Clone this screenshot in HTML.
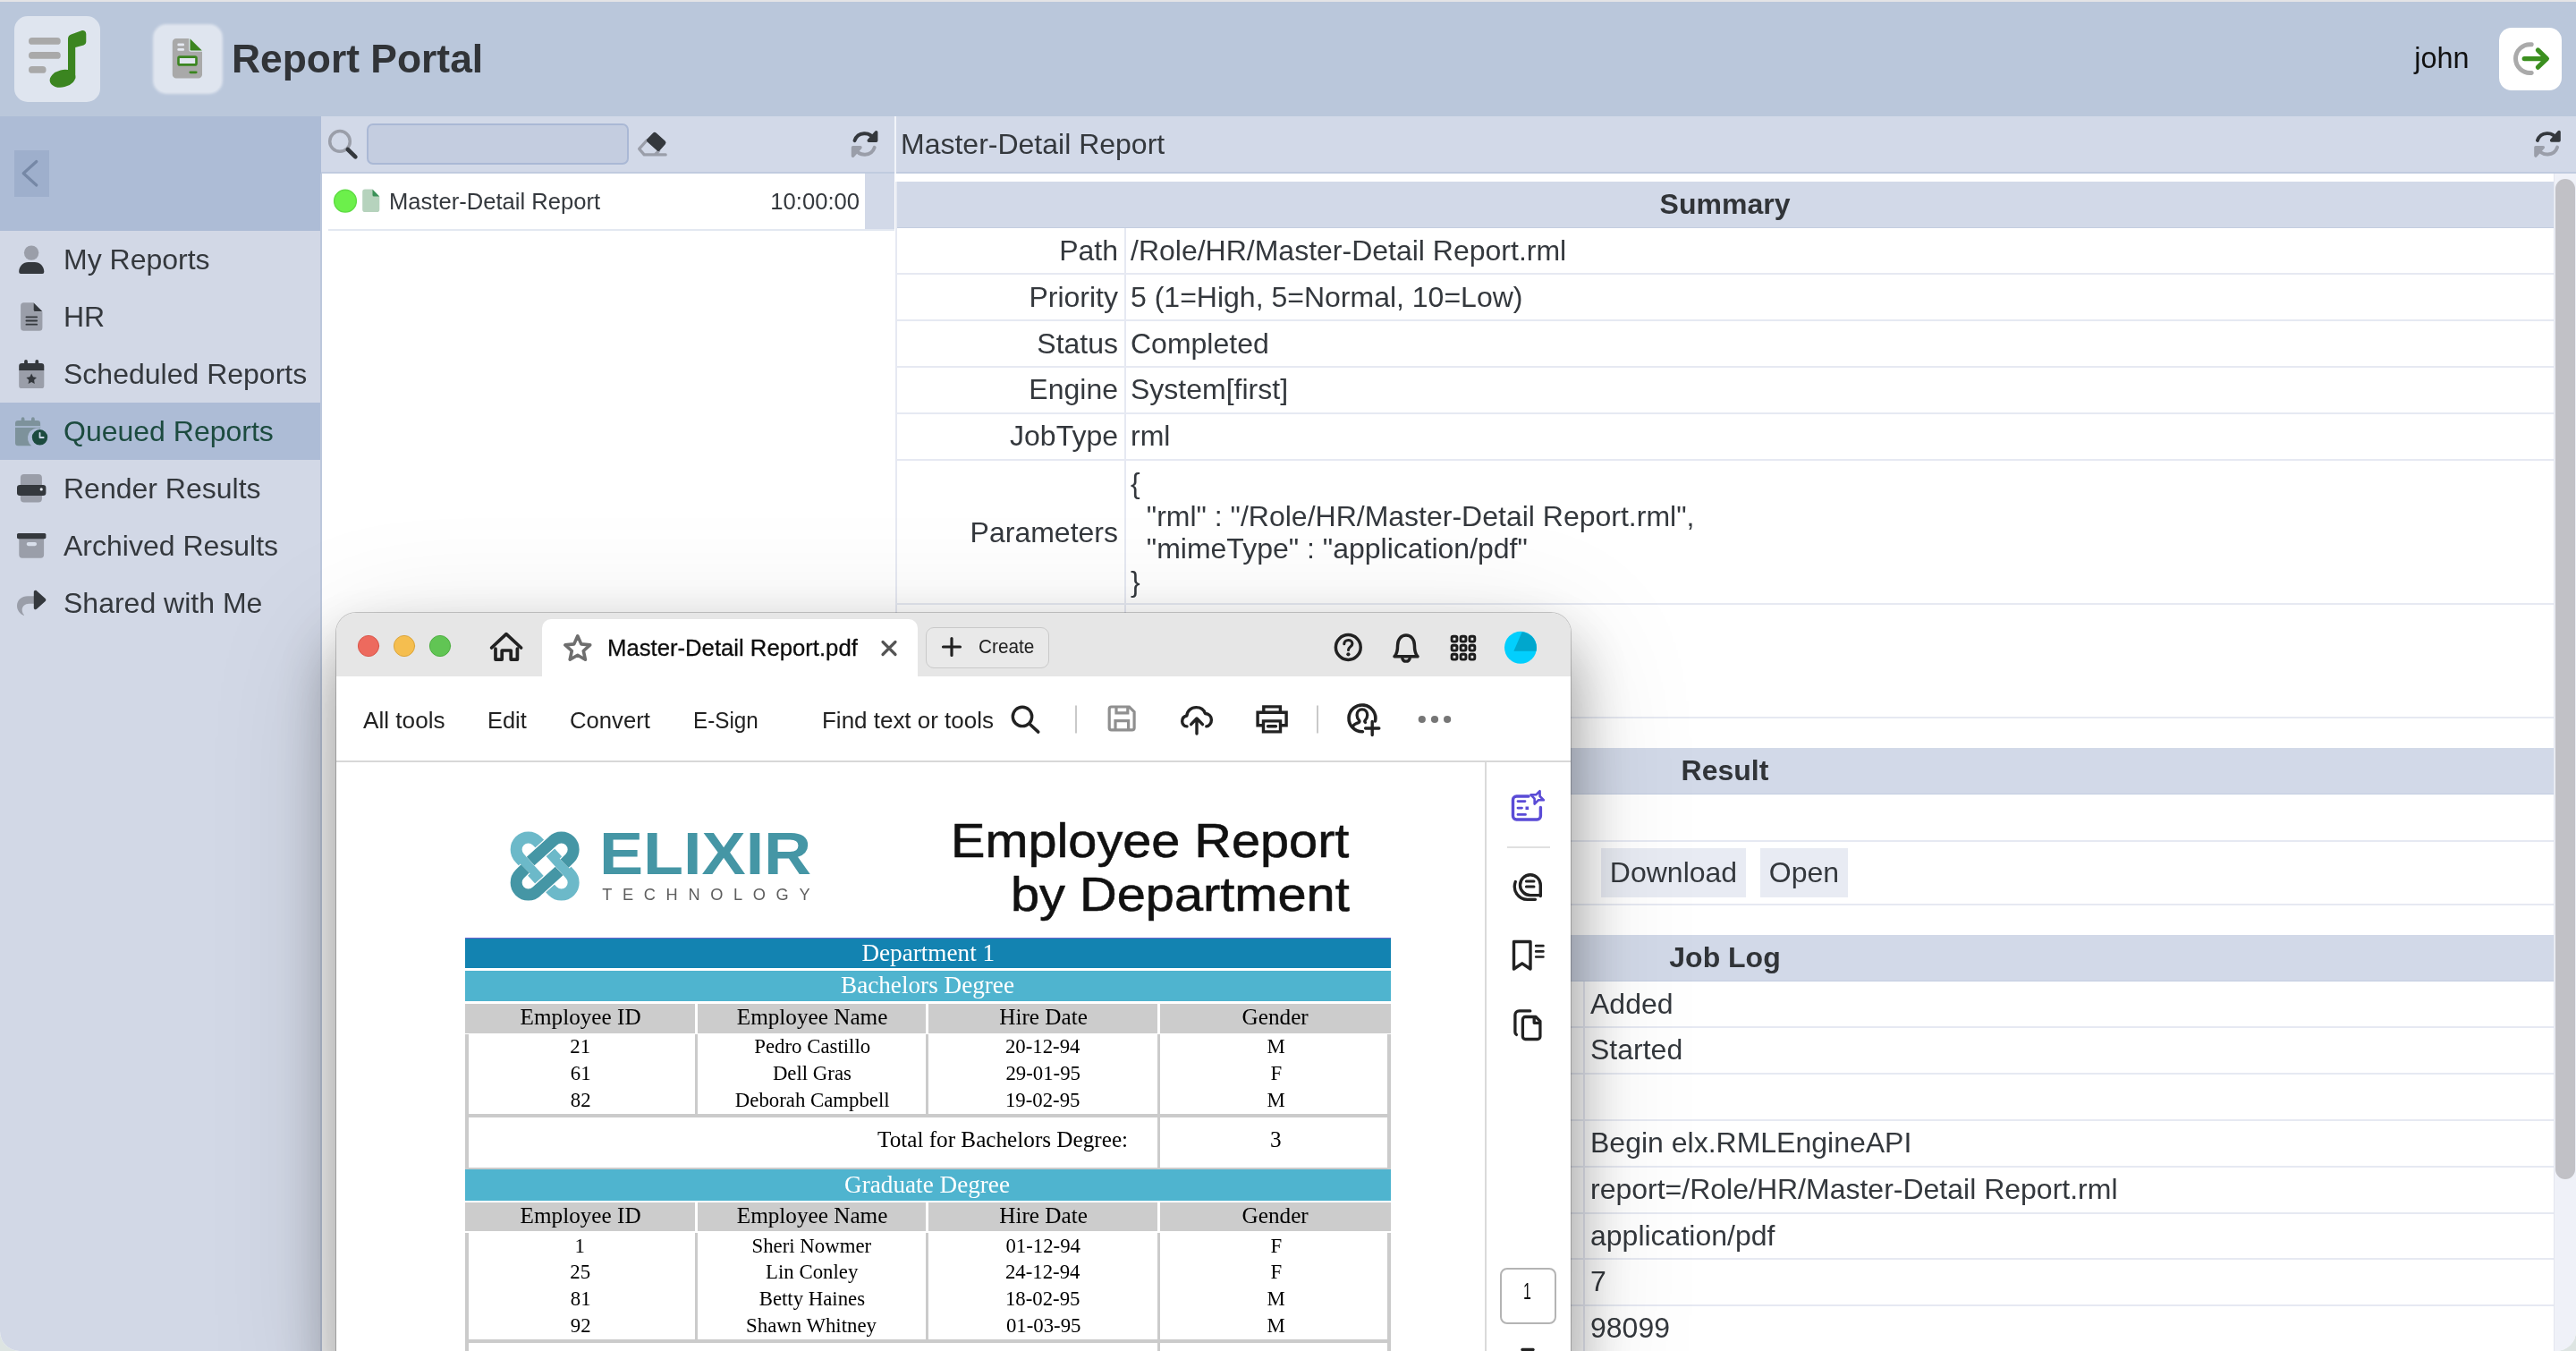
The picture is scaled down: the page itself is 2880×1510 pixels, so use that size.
<!DOCTYPE html>
<html lang="en">
<head>
<meta charset="utf-8">
<title>Report Portal</title>
<style>
*{box-sizing:border-box;margin:0;padding:0}
html,body{-webkit-font-smoothing:antialiased;width:2880px;height:1510px;overflow:hidden;background:#dde4e2;font-family:"Liberation Sans",sans-serif;color:#34383d}
.abs{position:absolute}
#app{will-change:transform;position:absolute;left:0;top:0;width:2880px;height:1510px;overflow:hidden;border-radius:0 0 22px 22px;background:#fff}
#topstrip{left:0;top:0;width:2880px;height:2px;background:#e4e4e6;z-index:5}
/* header */
#hdr{left:0;top:0;width:2880px;height:130px;background:#bac7db}
#logo{left:16px;top:18px;width:96px;height:96px;border-radius:15px;background:#dfe5ef}
#appicon{left:173px;top:29px;width:74px;height:74px;border-radius:13px;background:#dfe5ef;box-shadow:0 0 3px 2px #dfe5ef}
#apptitle{left:259px;top:38px;font-size:44.4px;font-weight:bold;line-height:56px;color:#313438;white-space:nowrap}
#user{left:2699.300px;top:43px;font-size:32.4px;line-height:44px;color:#111;white-space:nowrap}
#logout{left:2794px;top:31px;width:70px;height:70px;border-radius:14px;background:#fff}
/* sidebar */
#side{left:0;top:130px;width:360px;height:1380px;background:#d2d8e6}
#sidetop{left:0;top:0;width:359px;height:128px;background:#adbcd6}
#collapse{left:16px;top:38px;width:39px;height:52px;background:#9eafcc}
.nav{left:0;width:360px;height:64px;font-size:32px;line-height:64px;white-space:nowrap;color:#34383d}
.nav span{position:absolute;left:71px;top:0}
.nav svg{position:absolute;left:17px;top:14px;width:36px;height:36px}
.nav.sel{background:#adbcd6;color:#1c4b3f}
#sideedge{left:358px;top:64px;width:2px;height:1316px;background:#bcc7dc}
/* list panel */
#list{left:360px;top:130px;width:640px;height:1380px;background:#fff}
#ltool{left:-1px;top:0;width:641px;height:64px;background:#d2d9e8;border-bottom:2px solid #c0cbdf}
#lsearch{left:51px;top:8px;width:293px;height:46px;border-radius:7px;border:2px solid #aab8d5;background:#c4cde0}
#lrow{left:0;top:64px;width:640px;height:62px;font-size:25.6px;line-height:62px;white-space:nowrap}
#lrowline{left:7px;top:126px;width:633px;height:2px;background:#e3e8f1}
#lrowsel{left:607px;top:64px;width:33px;height:62px;background:#d2d9e8}
/* detail */
#det{left:1000px;top:130px;width:1880px;height:1380px;background:#fff}
#dtool{left:0;top:0;width:1880px;height:64px;background:#d2d9e8;border-bottom:2px solid #c0cbdf}
#dtitle{left:7px;top:0;font-size:32px;line-height:62px;white-space:nowrap}
.sec{left:2px;width:1853px;height:52px;background:#d2d9e8;font-size:32px;font-weight:bold;line-height:50px;text-align:center;color:#313438;border-bottom:1px solid #c3cde0}
.hl{left:2px;width:1853px;height:2px;background:#e6e9f2}
.vl{width:2px;background:#e6e9f2}
.lab{left:2px;width:248px;margin-top:-1px;text-align:right;font-size:32px;line-height:52px;white-space:nowrap}
.val{left:264px;margin-top:-1px;font-size:32px;line-height:52px;white-space:nowrap}
.btn{top:818px;height:55px;background:#e8ebf3;font-size:32px;line-height:55px;text-align:center}
#sbtrack{left:1855px;top:64px;width:25px;height:1316px;background:#eff1f8;border-left:1px solid #e3e6ef}
#sbthumb{left:1857px;top:70px;width:22px;height:1118px;border-radius:11px;background:#c1c1c6}
</style>
</head>
<body>
<div id="app">

<!-- ================= PORTAL HEADER ================= -->
<div id="hdr" class="abs">
  <div id="logo" class="abs"></div>
  <div id="appicon" class="abs"></div>
  <div id="apptitle" class="abs">Report Portal</div>
  <div id="user" class="abs">john</div>
  <div id="logout" class="abs"></div>
  <svg class="abs" style="left:0;top:0" width="2880" height="130" viewBox="0 0 2880 130">
    <!-- logo: list-music -->
    <g fill="#a9a9a9"><rect x="32" y="42" width="35.8" height="7.8" rx="3.9"/><rect x="32" y="58" width="35.8" height="7.8" rx="3.9"/><rect x="32" y="74" width="19.6" height="7.8" rx="3.9"/></g>
    <g fill="#3b8520"><ellipse cx="70" cy="87.8" rx="14.6" ry="9.6" transform="rotate(-14 70 87.8)"/>
    <path d="M76 88V43.2c0-2.2 1.4-4.1 3.5-4.8l11.6-4.2c2.6-.9 5.2 1 5.200 3.700v8.600c0 1.800-1.100 3.300-2.800 3.900L84.200 52.900V88z"/></g>
    <!-- app icon: file-invoice -->
    <path fill="#a9a9a9" d="M197 43h14.200v12.500a2.200 2.200 0 0 0 2.200 2.200H226v25.700a4.200 4.200 0 0 1-4.200 4.200h-24.800a4.200 4.200 0 0 1-4.200-4.200V47.200A4.200 4.200 0 0 1 197 43z"/>
    <path fill="#3b8520" d="M212.500 43.200L225.800 56.500H213.700a1.200 1.200 0 0 1-1.200-1.200z"/>
    <rect x="198.300" y="48.600" width="7.800" height="2.600" rx="1.300" fill="#e6eaf2"/><rect x="198.300" y="54.100" width="7.800" height="2.600" rx="1.300" fill="#e6eaf2"/>
    <rect x="199.500" y="63.600" width="20" height="8.800" rx="1.500" fill="#e1e6f0" stroke="#3b8520" stroke-width="2.600"/>
    <rect x="211.400" y="79.400" width="9.200" height="2.900" rx="1.450" fill="#3b8520"/>
    <!-- logout -->
    <path d="M2830.200 81.400A15.900 15.900 0 1 1 2830.200 49.800" fill="none" stroke="#aaaaaa" stroke-width="5" stroke-linecap="round"/>
    <path d="M2822.200 65.600H2847M2837.400 56L2847.400 65.600L2837.400 75.200" fill="none" stroke="#3b8f1f" stroke-width="5.200" stroke-linecap="round" stroke-linejoin="round"/>
  </svg>
</div>
<div id="topstrip" class="abs"></div>

<!-- ================= SIDEBAR ================= -->
<div id="side" class="abs">
  <div id="sidetop" class="abs"><div id="collapse" class="abs"></div></div>
  <div class="nav abs" style="top:128px"><span>My Reports</span></div>
  <div class="nav abs" style="top:192px"><span>HR</span></div>
  <div class="nav abs" style="top:256px"><span>Scheduled Reports</span></div>
  <div class="nav abs sel" style="top:320px"><span>Queued Reports</span></div>
  <div class="nav abs" style="top:384px"><span>Render Results</span></div>
  <div class="nav abs" style="top:448px"><span>Archived Results</span></div>
  <div class="nav abs" style="top:512px"><span>Shared with Me</span></div>
  <div id="sideedge" class="abs"></div>
  <svg class="abs" style="left:0;top:0" width="360" height="700" viewBox="0 130 360 700">
    <path d="M40.800 180.500L26.200 193.800L40.800 207" fill="none" stroke="#7688a6" stroke-width="3.200" stroke-linecap="round" stroke-linejoin="round"/>
    <!-- user -->
    <circle cx="35.100" cy="282.600" r="8.200" fill="#9a9ea9"/>
    <path d="M21.200 303.500c0-5.800 4.700-10.500 10.500-10.500h7.100c5.800 0 10.500 4.700 10.500 10.500v.500a2 2 0 0 1-2 2h-24.100a2 2 0 0 1-2-2z" fill="#34383d"/>
    <!-- file-lines -->
    <path d="M26.600 338.200H37.200v7.800a2.200 2.200 0 0 0 2.200 2.200h8v18.100a3.500 3.500 0 0 1-3.500 3.500H26.600a3.500 3.500 0 0 1-3.500-3.500V341.700a3.500 3.500 0 0 1 3.500-3.500z" fill="#9a9ea9"/>
    <path d="M37.500 338.300L47.300 348.100H39.400a1.900 1.900 0 0 1-1.900-1.900z" fill="#34383d"/>
    <path d="M29.400 354.300H41.200M29.400 358.500H41.200M29.400 362.700H41.200" stroke="#34383d" stroke-width="1.800" stroke-linecap="round"/>
    <!-- calendar-star -->
    <path d="M21.200 413.900H49.300v17a3.200 3.200 0 0 1-3.200 3.200H24.400a3.200 3.200 0 0 1-3.200-3.200z" fill="#9a9ea9"/>
    <path d="M21.200 413.900v-4.800a3.200 3.200 0 0 1 3.200-3.200h2.700v-2a1.900 1.900 0 0 1 3.800 0v2h8.500v-2a1.900 1.900 0 0 1 3.800 0v2h2.900a3.200 3.200 0 0 1 3.200 3.200v4.800z" fill="#34383d"/>
    <path d="M35.200 417.600l1.800 3.700 4 .600-2.900 2.900.700 4.100-3.600-1.900-3.600 1.900.700-4.100-2.900-2.900 4-.600z" fill="#34383d"/>
    <!-- calendar-clock (selected) -->
    <path d="M20.200 470h21.700a3.200 3.200 0 0 1 3.200 3.200v5.800a11 11 0 0 0-9.800 19.300H20.200a3.200 3.200 0 0 1-3.200-3.200V473.200a3.200 3.200 0 0 1 3.200-3.200z" fill="#7d929b"/>
    <path d="M23.700 468.200a1.900 1.900 0 0 1 3.800 0v3.200h-3.800zM35 468.200a1.900 1.900 0 0 1 3.800 0v3.200H35z" fill="#7d929b"/>
    <rect x="17" y="476.200" width="28.100" height="1.600" fill="#adbcd6"/>
    <circle cx="44.500" cy="488.800" r="8.700" fill="#1c4b3f"/>
    <path d="M44.500 484v5h4.200" fill="none" stroke="#c9d6e6" stroke-width="1.800" stroke-linecap="round" stroke-linejoin="round"/>
    <!-- print -->
    <rect x="22.900" y="530" width="24" height="31.600" rx="4" fill="#9a9ea9"/>
    <rect x="19" y="541.900" width="32.400" height="12" rx="3.200" fill="#34383d"/>
    <circle cx="46.200" cy="546.900" r="1.600" fill="#e8ecf4"/>
    <!-- box-archive -->
    <path d="M21.300 602.100H49.100v18a3.600 3.600 0 0 1-3.600 3.600H24.900a3.600 3.600 0 0 1-3.600-3.600z" fill="#9a9ea9"/>
    <rect x="19" y="596" width="32.400" height="6.200" rx="1.600" fill="#34383d"/>
    <rect x="29.700" y="605.900" width="11.400" height="4.300" rx="2.100" fill="#d9dfeb"/>
    <!-- share -->
    <path d="M38.500 666.200v8.600h-6c-4.600 0-7.800 3.200-7.800 7 0 2.600 1.100 4.300 2.100 5.200.500.500 0 1.100-.600.800C22.500 686.200 19 682.400 19 677c0-6.400 5.200-10.800 12.200-10.800z" fill="#9a9ea9"/>
    <path d="M37.800 661.700c0-1.600 1.900-2.400 3.100-1.400l9.800 8.800c.900.800.900 2.100 0 2.900l-9.800 8.800c-1.200 1.100-3.100.200-3.100-1.400z" fill="#34383d"/>
  </svg>
</div>

<!-- ================= LIST PANEL ================= -->
<div id="list" class="abs">
  <div id="ltool" class="abs"><div id="lsearch" class="abs"></div></div>
  <div id="lrow" class="abs"><span class="abs" style="left:75px">Master-Detail Report</span><span class="abs" style="right:39px">10:00:00</span></div>
  <div id="lrowsel" class="abs"></div>
  <div id="lrowline" class="abs"></div>
  <svg class="abs" style="left:0;top:0" width="640" height="140" viewBox="360 130 640 140">
    <circle cx="380" cy="157.900" r="11.300" fill="none" stroke="#9a9ea9" stroke-width="3.500"/>
    <path d="M388.800 167L397.400 175.400" stroke="#34383d" stroke-width="4.600" stroke-linecap="round"/>
    <path d="M723.300 156.700L714.600 166.400L720.200 172.900H744.200M736.600 168.500L732.200 172.900" fill="none" stroke="#9a9ea9" stroke-width="3.200" stroke-linecap="round" stroke-linejoin="round"/>
    <path d="M730 148.700a2.600 2.600 0 0 1 3.600-.100l10 9a2.600 2.600 0 0 1 .200 3.600l-6.200 7a2 2 0 0 1-2.800.200l-11.200-10a2 2 0 0 1-.200-2.800z" fill="#34383d"/>
    <path d="M955.5 157.2A11.7 11.7 0 0 1 977.2 156.1" fill="none" stroke="#34383d" stroke-width="3.900" stroke-linecap="round"/><path d="M979.7 147.7v9.500h-8.500z" fill="#34383d" stroke="#34383d" stroke-width="3.400" stroke-linecap="round" stroke-linejoin="round"/><path d="M977.7 164.8A11.7 11.7 0 0 1 956.0 165.9" fill="none" stroke="#9a9ea9" stroke-width="3.900" stroke-linecap="round"/><path d="M953.5 174.3v-9.500h8.500z" fill="#9a9ea9" stroke="#9a9ea9" stroke-width="3.400" stroke-linecap="round" stroke-linejoin="round"/>
    <circle cx="386" cy="224.700" r="12.400" fill="#6cf04b" stroke="#5fdc44" stroke-width="1.400"/>
    <path d="M408 211.600h8.500l7.800 7.800v14.800a2.800 2.800 0 0 1-2.800 2.800H408a2.800 2.800 0 0 1-2.800-2.800v-19.800a2.800 2.800 0 0 1 2.800-2.800z" fill="#b6d3bd"/>
    <path d="M416.500 211.800L424.100 219.400H418a1.500 1.500 0 0 1-1.500-1.500z" fill="#3a9157"/>
  </svg>
</div>

<!-- ================= DETAIL PANEL ================= -->
<div id="det" class="abs">
  <div id="dtool" class="abs"><div id="dtitle" class="abs">Master-Detail Report</div></div>
  <svg class="abs" style="left:1800px;top:0" width="80" height="64" viewBox="2800 130 80 64"><path d="M2836.9 157.0A11.7 11.7 0 0 1 2858.6 155.9" fill="none" stroke="#34383d" stroke-width="3.900" stroke-linecap="round"/><path d="M2861.1 147.5v9.500h-8.500z" fill="#34383d" stroke="#34383d" stroke-width="3.400" stroke-linecap="round" stroke-linejoin="round"/><path d="M2859.1 164.6A11.7 11.7 0 0 1 2837.4 165.7" fill="none" stroke="#9a9ea9" stroke-width="3.900" stroke-linecap="round"/><path d="M2834.9 174.1v-9.500h8.500z" fill="#9a9ea9" stroke="#9a9ea9" stroke-width="3.400" stroke-linecap="round" stroke-linejoin="round"/></svg>
  <div class="sec abs" style="top:73px">Summary</div>
  <div class="lab abs" style="top:125px">Path</div><div class="val abs" style="top:125px">/Role/HR/Master-Detail Report.rml</div>
  <div class="lab abs" style="top:177px">Priority</div><div class="val abs" style="top:177px">5 (1=High, 5=Normal, 10=Low)</div>
  <div class="lab abs" style="top:229px">Status</div><div class="val abs" style="top:229px">Completed</div>
  <div class="lab abs" style="top:280px">Engine</div><div class="val abs" style="top:280px">System[first]</div>
  <div class="lab abs" style="top:332px">JobType</div><div class="val abs" style="top:332px">rml</div>
  <div class="hl abs" style="top:175px"></div>
  <div class="hl abs" style="top:227px"></div>
  <div class="hl abs" style="top:279px"></div>
  <div class="hl abs" style="top:331px"></div>
  <div class="hl abs" style="top:383px"></div>
  <div class="hl abs" style="top:544px"></div>
  <div class="hl abs" style="top:671px"></div>
  <div class="lab abs" style="top:386px;line-height:161px">Parameters</div>
  <pre class="val abs" style="top:393px;line-height:36.6px;font-family:inherit;white-space:pre">{
  "rml" : "/Role/HR/Master-Detail Report.rml",
  "mimeType" : "application/pdf"
}</pre>
  <div class="vl abs" style="left:257px;top:125px;height:547px"></div>
  <div class="vl abs" style="left:1px;top:73px;height:1307px"></div>
  <div class="sec abs" style="top:706px">Result</div>
  <div class="hl abs" style="top:809px"></div>
  <div class="hl abs" style="top:880px"></div>
  <div class="btn abs" style="left:790px;width:162px">Download</div>
  <div class="btn abs" style="left:968px;width:98px">Open</div>
  <div class="sec abs" style="top:915px">Job Log</div>
  <div class="val abs" style="left:778px;top:967px">Added</div>
  <div class="val abs" style="left:778px;top:1018px">Started</div>
  <div class="val abs" style="left:778px;top:1122px">Begin elx.RMLEngineAPI</div>
  <div class="val abs" style="left:778px;top:1174px">report=/Role/HR/Master-Detail Report.rml</div>
  <div class="val abs" style="left:778px;top:1225.5px">application/pdf</div>
  <div class="val abs" style="left:778px;top:1277px">7</div>
  <div class="val abs" style="left:778px;top:1329px">98099</div>
  <div class="hl abs" style="top:1017px"></div>
  <div class="hl abs" style="top:1069px"></div>
  <div class="hl abs" style="top:1121px"></div>
  <div class="hl abs" style="top:1173px"></div>
  <div class="hl abs" style="top:1224.5px"></div>
  <div class="hl abs" style="top:1276px"></div>
  <div class="hl abs" style="top:1328px"></div>
  <div class="vl abs" style="left:770px;top:967px;height:413px"></div>
  <div id="sbtrack" class="abs"></div>
  <div id="sbthumb" class="abs"></div>
</div>

<div class="abs" style="left:1000px;top:130px;width:2px;height:64px;background:#f2f4f9"></div>
<style>
#awin{position:absolute;left:376px;top:685px;width:1380px;height:860px;border-radius:22px 22px 0 0;overflow:hidden;background:#fff;box-shadow:0 0 0 1px rgba(0,0,0,.2),0 36px 68px 0 rgba(0,0,0,.38),0 30px 150px 0 rgba(0,0,0,.13)}
#ain{position:absolute;left:-376px;top:-685px;width:2880px;height:1600px}
#ain .t{position:absolute;white-space:nowrap;display:block}
#ain div{position:absolute}
.gl{background:#cbcbcb}
</style>
<div id="awin"><div id="ain">
<div style="left:376px;top:685px;width:1380px;height:71px;background:#e6e6e6"></div>
<div style="left:606px;top:692px;width:420px;height:64px;background:#fff;border-radius:10px 10px 0 0"></div>
<div style="left:1035px;top:701px;width:138px;height:46px;border:1.5px solid #c9c9c9;border-radius:9px;background:#e9e9e9"></div>
<div style="left:376px;top:850px;width:1380px;height:2px;background:#d8d8d8"></div>
<div style="left:1660px;top:852px;width:2px;height:700px;background:#dadada"></div>
<div style="left:1685px;top:946px;width:48px;height:2px;background:#e0e0e0"></div>
<div style="left:1676.500px;top:1416.500px;width:63px;height:63px;border:2px solid #b4b4b4;border-radius:8px;background:#fff"></div>
<span class="t" style="left:678.6px;top:708.2px;font-size:26.4px;line-height:32px;color:#0c0c0c;transform:scaleX(0.9733);transform-origin:0 0;-webkit-text-stroke:0.300px #0c0c0c;">Master-Detail Report.pdf</span>
<span class="t" style="left:1093.6px;top:708.7px;font-size:22.5px;line-height:27px;color:#222222;transform:scaleX(0.9240);transform-origin:0 0;">Create</span>
<span class="t" style="left:406.0px;top:788.6px;font-size:26.4px;line-height:32px;color:#222222;transform:scaleX(0.9912);transform-origin:0 0;">All tools</span>
<span class="t" style="left:545.1px;top:788.6px;font-size:26.4px;line-height:32px;color:#222222;transform:scaleX(0.9605);transform-origin:0 0;">Edit</span>
<span class="t" style="left:637.4px;top:788.6px;font-size:26.4px;line-height:32px;color:#222222;transform:scaleX(0.9731);transform-origin:0 0;">Convert</span>
<span class="t" style="left:775.2px;top:788.6px;font-size:26.4px;line-height:32px;color:#222222;transform:scaleX(0.9188);transform-origin:0 0;">E-Sign</span>
<span class="t" style="left:918.5px;top:788.6px;font-size:26.4px;line-height:32px;color:#222222;transform:scaleX(0.9840);transform-origin:0 0;">Find text or tools</span>
<span class="t" style="left:1702.7px;top:1427.5px;font-size:25.5px;line-height:31px;color:#111;transform:scaleX(0.6250);transform-origin:0 0;">1</span>
<svg style="position:absolute;left:376px;top:685px" width="1380" height="830" viewBox="376 685 1380 830" fill="none" stroke-linecap="round" stroke-linejoin="round">
<circle cx="412" cy="722" r="11.6" fill="#ed6a5e" stroke="#d9574b" stroke-width="1"/>
<circle cx="452" cy="722" r="11.6" fill="#f5be4f" stroke="#dba53c" stroke-width="1"/>
<circle cx="492" cy="722" r="11.6" fill="#61c554" stroke="#4faf43" stroke-width="1"/>
<path d="M549.600 724L566 708.600L582.600 724M554 725V737.100H561.200V727H571.200V737.100H578.400V725" stroke="#222222" stroke-width="3.700"/>
<path d="M645.8 710.8L649.8 719.9L659.7 720.9L652.3 727.5L654.4 737.2L645.8 732.2L637.2 737.2L639.3 727.5L631.9 720.9L641.8 719.9Z" stroke="#6e6e6e" stroke-width="3.600"/>
<path d="M987 717.500L1001 731.500M1001 717.500L987 731.500" stroke="#555" stroke-width="3.200"/>
<path d="M1054.500 723H1073.500M1064 713.500V732.500" stroke="#222222" stroke-width="3.200"/>
<circle cx="1507.300" cy="723.500" r="13.900" stroke="#222222" stroke-width="3.500"/>
<path d="M1502.800 719.800c0-2.600 2-4.300 4.600-4.300 2.600 0 4.500 1.600 4.500 3.900 0 3.400-4.400 3.500-4.400 7.100" stroke="#222222" stroke-width="3.100"/><circle cx="1507.400" cy="731.300" r="2.100" fill="#222222"/>
<path d="M1559 733.800c3.400-3.400 3.600-7.600 3.600-12.800 0-6.400 4-11 9.400-11s9.400 4.600 9.400 11c0 5.200.200 9.400 3.600 12.800z" stroke="#222222" stroke-width="3.500"/>
<path d="M1567.800 735.800a4.300 4.300 0 0 0 8.400 0" stroke="#222222" stroke-width="3.300"/>
<rect x="1623.1" y="711.3" width="5.800" height="5.800" rx="1.600" stroke="#1c1c1c" stroke-width="2.900"/>
<rect x="1623.1" y="721.3" width="5.800" height="5.800" rx="1.600" stroke="#1c1c1c" stroke-width="2.900"/>
<rect x="1623.1" y="731.3" width="5.800" height="5.800" rx="1.600" stroke="#1c1c1c" stroke-width="2.900"/>
<rect x="1633.1" y="711.3" width="5.800" height="5.800" rx="1.600" stroke="#1c1c1c" stroke-width="2.900"/>
<rect x="1633.1" y="721.3" width="5.800" height="5.800" rx="1.600" stroke="#1c1c1c" stroke-width="2.900"/>
<rect x="1633.1" y="731.3" width="5.800" height="5.800" rx="1.600" stroke="#1c1c1c" stroke-width="2.900"/>
<rect x="1643.0" y="711.3" width="5.800" height="5.800" rx="1.600" stroke="#1c1c1c" stroke-width="2.900"/>
<rect x="1643.0" y="721.3" width="5.800" height="5.800" rx="1.600" stroke="#1c1c1c" stroke-width="2.900"/>
<rect x="1643.0" y="731.3" width="5.800" height="5.800" rx="1.600" stroke="#1c1c1c" stroke-width="2.900"/>
<circle cx="1700" cy="723.800" r="18" fill="#02cffd"/>
<path d="M1692.400 727.800L1701.700 706.300A18 18 0 0 1 1717.600 727.800Z" fill="#00a7cd"/>
<circle cx="1143" cy="800.900" r="10.700" stroke="#222222" stroke-width="3.400"/><path d="M1151.200 809.200L1160.800 818.100" stroke="#222222" stroke-width="3.500"/>
<path d="M1203 788.500V819.500M1473 788.500V819.500" stroke="#c9c9c9" stroke-width="2" stroke-linecap="butt"/>
<path d="M1240.200 792.500a2.500 2.500 0 0 1 2.500-2.500h19.800l5.600 5.600v17.800a2.500 2.500 0 0 1-2.500 2.500h-22.900a2.500 2.500 0 0 1-2.500-2.500zM1248 790.500v6.300h12.800v-6.300M1247 815.500v-9.800h14.600v9.800" stroke="#909090" stroke-width="3.200" stroke-linejoin="miter"/>
<path d="M1327 811.900c-3.300-.300-5.300-2.700-5.300-5.700 0-3.200 2.200-5.600 5.200-6.200.300-5.300 4.700-9.400 10.500-9.400 4.800 0 8.700 2.800 10 6.900 4.200.300 7 3.200 7 7 0 3.900-2.500 7.100-5.600 7.400" stroke="#222222" stroke-width="3.400"/>
<path d="M1338 820V803.200M1331.600 809.600L1338 803L1344.500 809.600" stroke="#222222" stroke-width="3.400"/>
<path d="M1412.800 794.500V789.900H1431.400V794.500M1410.800 810.800H1406.100V796.200H1438.100V810.800H1433.300M1412.500 805.900H1431.500V817.900H1412.500ZM1417.500 811.700H1426.500" stroke="#222222" stroke-width="3.400" stroke-linejoin="miter"/>
<path d="M1537.5 806.0A14.9 14.9 0 1 0 1523.4 817.8" stroke="#222222" stroke-width="3.600"/>
<path d="M1512.300 812.300c1.200-2.600 3.800-3.800 6.700-4.600 1.200-.400 1.300-1.700.500-2.600-1.500-1.600-2.400-3.600-2.400-5.900 0-3.700 2.500-6.300 5.800-6.300s5.800 2.600 5.800 6.300c0 2.300-.900 4.300-2.400 5.900-.600.700-.500 1.700.200 2.300" stroke="#222222" stroke-width="3.300"/>
<path d="M1526.600 814H1541.800M1534.200 806.400V821.600" stroke="#222222" stroke-width="3.400"/>
<circle cx="1589.8" cy="804" r="4.100" fill="#767676"/>
<circle cx="1604" cy="804" r="4.100" fill="#767676"/>
<circle cx="1618.1" cy="804" r="4.100" fill="#767676"/>
<path d="M1709 890H1695.500a4 4 0 0 0-4 4V912a4 4 0 0 0 4 4H1718.400a4 4 0 0 0 4-4V902.500" stroke="#5a4bd6" stroke-width="3.400"/>
<path d="M1697 895.600H1705M1697 903.100H1701.500M1697 910.400H1705.500" stroke="#5a4bd6" stroke-width="2.800"/>
<path d="M1705.500 901.500h3.600v3.600h-3.600z" fill="#5a4bd6"/>
<path d="M1718.600 883.500l2.300 5.500 5.500 2.300-5.500 2.300-2.300 5.500-2.300-5.500-5.500-2.300 5.500-2.300z" stroke="#5a4bd6" stroke-width="2.600" transform="rotate(22 1718.600 891.300)"/>
<path d="M1722.300 1001.500V989.200a11.400 11.400 0 1 0-11.400 11.400H1721.400" stroke="#222222" stroke-width="3.400"/>
<path d="M1706.400 985H1715M1706.400 990.900H1715" stroke="#222222" stroke-width="3"/>
<path d="M1694.300 985.500c-3.600 9.500 3 19.800 13.400 19.800h8.800" stroke="#222222" stroke-width="3.300"/>
<path d="M1692.500 1052.500H1711V1083L1701.800 1076.800L1692.500 1083Z" stroke="#222222" stroke-width="3.400" stroke-linejoin="round"/>
<path d="M1717.200 1057.200H1725.400M1717.200 1063.400H1725.400M1717.200 1069.500H1725.400" stroke="#222222" stroke-width="2.700"/>
<path d="M1709 1136.500H1717l4.900 4.900V1158.500a3 3 0 0 1-3 3H1705.400a3 3 0 0 1-3-3V1139.500a3 3 0 0 1 3-3zM1715.200 1137v6.300h6.300" stroke="#222222" stroke-width="3.300"/>
<path d="M1710.800 1129.900H1698.500a4.600 4.600 0 0 0-4.600 4.600V1153.800a3 3 0 0 0 1.500 2.600" stroke="#222222" stroke-width="3.300"/>
<path d="M1702 1508.500H1714" stroke="#222222" stroke-width="3.400"/>
<g transform="translate(609.150 968)" stroke-linecap="butt" stroke-width="13">
<path d="M-16,-5.500L8.950,-28.050A13.500,13.500 0 1 1 28.050,-8.950L22,-2.900" transform="rotate(90)" stroke="#fff" stroke-width="15.400"/><path d="M-16,-5.500L8.950,-28.050A13.500,13.500 0 1 1 28.050,-8.950L22,-2.900" transform="rotate(90)" stroke="#6cb9c9"/>
<path d="M-16,-5.500L8.950,-28.050A13.500,13.500 0 1 1 28.050,-8.950L22,-2.900" transform="rotate(270)" stroke="#fff" stroke-width="15.400"/><path d="M-16,-5.500L8.950,-28.050A13.500,13.500 0 1 1 28.050,-8.950L22,-2.900" transform="rotate(270)" stroke="#6cb9c9"/>
<path d="M-16,-5.500L8.950,-28.050A13.500,13.500 0 1 1 28.050,-8.950L22,-2.900" transform="rotate(0)" stroke="#fff" stroke-width="15.400"/><path d="M-16,-5.500L8.950,-28.050A13.500,13.500 0 1 1 28.050,-8.950L22,-2.900" transform="rotate(0)" stroke="#4596a5"/>
<path d="M-16,-5.500L8.950,-28.050A13.500,13.500 0 1 1 28.050,-8.950L22,-2.900" transform="rotate(180)" stroke="#fff" stroke-width="15.400"/><path d="M-16,-5.500L8.950,-28.050A13.500,13.500 0 1 1 28.050,-8.950L22,-2.900" transform="rotate(180)" stroke="#4596a5"/>
</g>
</svg>
<span class="t" style="left:669.6px;top:913.6px;font-size:66.4px;line-height:80px;color:#4596a5;font-weight:bold;transform:scaleX(1.1090);transform-origin:0 0;">ELIXIR</span>
<span class="t" style="left:673.2px;top:989.4px;font-size:18.2px;line-height:22px;color:#5e5e5e;letter-spacing:11.67px">TECHNOLOGY</span>
<span class="t" style="left:1063.1px;top:906.9px;font-size:54.3px;line-height:65px;color:#111;transform:scaleX(1.0616);transform-origin:0 0;-webkit-text-stroke:0.600px #111;">Employee Report</span>
<span class="t" style="left:1129.7px;top:966.9px;font-size:54.3px;line-height:65px;color:#111;transform:scaleX(1.0634);transform-origin:0 0;-webkit-text-stroke:0.600px #111;">by Department</span>
<div style="left:520px;top:1048.300px;width:1035px;height:1px;background:#6c63cf"></div>
<div style="left:520px;top:1049.3px;width:1035px;height:33.2px;background:#1383b1"></div>
<span class="t" style="left:963.4px;top:1048.8px;font-size:27.2px;line-height:33px;color:#fff;font-family:'Liberation Serif',serif;">Department 1</span>
<div style="left:520px;top:1085.4px;width:1035px;height:33.3px;background:#4fb4cf"></div>
<span class="t" style="left:940.0px;top:1085.3px;font-size:27.2px;line-height:33px;color:#fff;font-family:'Liberation Serif',serif;">Bachelors Degree</span>
<div style="left:520px;top:1122px;width:257px;height:32.6px;background:#cccccc"></div>
<span class="t" style="left:581.6px;top:1121.8px;font-size:25.2px;line-height:30px;color:#000;font-family:'Liberation Serif',serif;">Employee ID</span>
<div style="left:780px;top:1122px;width:255px;height:32.6px;background:#cccccc"></div>
<span class="t" style="left:823.8px;top:1121.8px;font-size:25.2px;line-height:30px;color:#000;font-family:'Liberation Serif',serif;">Employee Name</span>
<div style="left:1038px;top:1122px;width:256px;height:32.6px;background:#cccccc"></div>
<span class="t" style="left:1117.3px;top:1121.8px;font-size:25.2px;line-height:30px;color:#000;font-family:'Liberation Serif',serif;">Hire Date</span>
<div style="left:1297px;top:1122px;width:258px;height:32.6px;background:#cccccc"></div>
<span class="t" style="left:1388.6px;top:1121.8px;font-size:25.2px;line-height:30px;color:#000;font-family:'Liberation Serif',serif;">Gender</span>
<div class="gl" style="left:520px;top:1156px;width:4px;height:89.0px"></div>
<div class="gl" style="left:1551px;top:1156px;width:4px;height:89.0px"></div>
<div class="gl" style="left:777px;top:1156px;width:3px;height:89.0px"></div>
<div class="gl" style="left:1035px;top:1156px;width:3px;height:89.0px"></div>
<div class="gl" style="left:1294px;top:1156px;width:3px;height:89.0px"></div>
<div class="gl" style="left:520px;top:1245px;width:1035px;height:4px"></div>
<span class="t" style="left:637.3px;top:1156.2px;font-size:22.8px;line-height:27px;color:#000;font-family:'Liberation Serif',serif;">21</span>
<span class="t" style="left:843.3px;top:1156.2px;font-size:22.8px;line-height:27px;color:#000;font-family:'Liberation Serif',serif;">Pedro Castillo</span>
<span class="t" style="left:1123.9px;top:1156.2px;font-size:22.8px;line-height:27px;color:#000;font-family:'Liberation Serif',serif;">20-12-94</span>
<span class="t" style="left:1416.5px;top:1156.2px;font-size:22.8px;line-height:27px;color:#000;font-family:'Liberation Serif',serif;">M</span>
<span class="t" style="left:637.8px;top:1185.9px;font-size:22.8px;line-height:27px;color:#000;font-family:'Liberation Serif',serif;">61</span>
<span class="t" style="left:863.9px;top:1185.9px;font-size:22.8px;line-height:27px;color:#000;font-family:'Liberation Serif',serif;">Dell Gras</span>
<span class="t" style="left:1124.4px;top:1185.9px;font-size:22.8px;line-height:27px;color:#000;font-family:'Liberation Serif',serif;">29-01-95</span>
<span class="t" style="left:1420.5px;top:1185.9px;font-size:22.8px;line-height:27px;color:#000;font-family:'Liberation Serif',serif;">F</span>
<span class="t" style="left:637.8px;top:1215.6px;font-size:22.8px;line-height:27px;color:#000;font-family:'Liberation Serif',serif;">82</span>
<span class="t" style="left:821.8px;top:1215.6px;font-size:22.8px;line-height:27px;color:#000;font-family:'Liberation Serif',serif;">Deborah Campbell</span>
<span class="t" style="left:1123.9px;top:1215.6px;font-size:22.8px;line-height:27px;color:#000;font-family:'Liberation Serif',serif;">19-02-95</span>
<span class="t" style="left:1416.5px;top:1215.6px;font-size:22.8px;line-height:27px;color:#000;font-family:'Liberation Serif',serif;">M</span>
<div class="gl" style="left:520px;top:1249px;width:4px;height:56px"></div><div class="gl" style="left:1551px;top:1249px;width:4px;height:56px"></div><div class="gl" style="left:1294px;top:1249px;width:3px;height:56px"></div>
<div class="gl" style="left:520px;top:1305px;width:1035px;height:2.500px"></div>
<span class="t" style="left:981.0px;top:1258.5px;font-size:25.2px;line-height:30px;color:#000;font-family:'Liberation Serif',serif;">Total for Bachelors Degree:</span>
<span class="t" style="left:1420.0px;top:1258.7px;font-size:25.2px;line-height:30px;color:#000;font-family:'Liberation Serif',serif;">3</span>
<div style="left:520px;top:1307px;width:1035px;height:34.6px;background:#4fb4cf"></div>
<span class="t" style="left:944.1px;top:1308.1px;font-size:27.2px;line-height:33px;color:#fff;font-family:'Liberation Serif',serif;">Graduate Degree</span>
<div style="left:520px;top:1344.3px;width:257px;height:32.2px;background:#cccccc"></div>
<span class="t" style="left:581.6px;top:1344.1px;font-size:25.2px;line-height:30px;color:#000;font-family:'Liberation Serif',serif;">Employee ID</span>
<div style="left:780px;top:1344.3px;width:255px;height:32.2px;background:#cccccc"></div>
<span class="t" style="left:823.8px;top:1344.1px;font-size:25.2px;line-height:30px;color:#000;font-family:'Liberation Serif',serif;">Employee Name</span>
<div style="left:1038px;top:1344.3px;width:256px;height:32.2px;background:#cccccc"></div>
<span class="t" style="left:1117.3px;top:1344.1px;font-size:25.2px;line-height:30px;color:#000;font-family:'Liberation Serif',serif;">Hire Date</span>
<div style="left:1297px;top:1344.3px;width:258px;height:32.2px;background:#cccccc"></div>
<span class="t" style="left:1388.6px;top:1344.1px;font-size:25.2px;line-height:30px;color:#000;font-family:'Liberation Serif',serif;">Gender</span>
<div class="gl" style="left:520px;top:1378px;width:4px;height:119.0px"></div>
<div class="gl" style="left:1551px;top:1378px;width:4px;height:119.0px"></div>
<div class="gl" style="left:777px;top:1378px;width:3px;height:119.0px"></div>
<div class="gl" style="left:1035px;top:1378px;width:3px;height:119.0px"></div>
<div class="gl" style="left:1294px;top:1378px;width:3px;height:119.0px"></div>
<div class="gl" style="left:520px;top:1497px;width:1035px;height:4px"></div>
<span class="t" style="left:642.5px;top:1378.7px;font-size:22.8px;line-height:27px;color:#000;font-family:'Liberation Serif',serif;">1</span>
<span class="t" style="left:840.5px;top:1378.7px;font-size:22.8px;line-height:27px;color:#000;font-family:'Liberation Serif',serif;">Sheri Nowmer</span>
<span class="t" style="left:1124.4px;top:1378.7px;font-size:22.8px;line-height:27px;color:#000;font-family:'Liberation Serif',serif;">01-12-94</span>
<span class="t" style="left:1420.5px;top:1378.7px;font-size:22.8px;line-height:27px;color:#000;font-family:'Liberation Serif',serif;">F</span>
<span class="t" style="left:637.3px;top:1408.4px;font-size:22.8px;line-height:27px;color:#000;font-family:'Liberation Serif',serif;">25</span>
<span class="t" style="left:856.1px;top:1408.4px;font-size:22.8px;line-height:27px;color:#000;font-family:'Liberation Serif',serif;">Lin Conley</span>
<span class="t" style="left:1123.9px;top:1408.4px;font-size:22.8px;line-height:27px;color:#000;font-family:'Liberation Serif',serif;">24-12-94</span>
<span class="t" style="left:1420.5px;top:1408.4px;font-size:22.8px;line-height:27px;color:#000;font-family:'Liberation Serif',serif;">F</span>
<span class="t" style="left:637.8px;top:1438.1px;font-size:22.8px;line-height:27px;color:#000;font-family:'Liberation Serif',serif;">81</span>
<span class="t" style="left:848.7px;top:1438.1px;font-size:22.8px;line-height:27px;color:#000;font-family:'Liberation Serif',serif;">Betty Haines</span>
<span class="t" style="left:1123.9px;top:1438.1px;font-size:22.8px;line-height:27px;color:#000;font-family:'Liberation Serif',serif;">18-02-95</span>
<span class="t" style="left:1416.5px;top:1438.1px;font-size:22.8px;line-height:27px;color:#000;font-family:'Liberation Serif',serif;">M</span>
<span class="t" style="left:637.8px;top:1467.8px;font-size:22.8px;line-height:27px;color:#000;font-family:'Liberation Serif',serif;">92</span>
<span class="t" style="left:834.1px;top:1467.8px;font-size:22.8px;line-height:27px;color:#000;font-family:'Liberation Serif',serif;">Shawn Whitney</span>
<span class="t" style="left:1124.9px;top:1467.8px;font-size:22.8px;line-height:27px;color:#000;font-family:'Liberation Serif',serif;">01-03-95</span>
<span class="t" style="left:1416.5px;top:1467.8px;font-size:22.8px;line-height:27px;color:#000;font-family:'Liberation Serif',serif;">M</span>
<div class="gl" style="left:520px;top:1501px;width:4px;height:56px"></div><div class="gl" style="left:1551px;top:1501px;width:4px;height:56px"></div><div class="gl" style="left:1294px;top:1501px;width:3px;height:56px"></div>
</div></div>

</div>
</body>
</html>
